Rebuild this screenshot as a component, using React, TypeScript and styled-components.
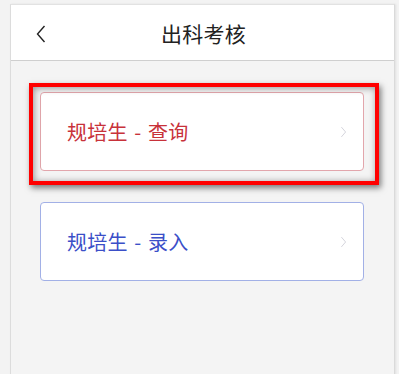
import React from "react";
import styled, { createGlobalStyle } from "styled-components";

const Global = createGlobalStyle`
  html, body { margin: 0; padding: 0; background: #f3f3f3; }
  body { font-family: "Noto Sans CJK SC", "Noto Sans", sans-serif; }
`;

const Frame = styled.div`
  margin: 4px 0 0 10px;
  width: 383px;
  height: 370px;
  background: #f4f4f4;
  border-left: 1px solid #dcdcdc;
  border-right: 1px solid #dadada;
  border-top: 1px solid #e2e2e2;
  box-shadow: 1px 0 2px rgba(0, 0, 0, 0.08);
  display: flex;
  flex-direction: column;
`;

const Header = styled.header`
  height: 55px;
  background: #fff;
  border-bottom: 1px solid #cfcfcf;
  display: flex;
  align-items: center;
  justify-content: center;
  position: relative;
`;

const Back = styled.button`
  position: absolute;
  left: 22px;
  top: 19px;
  width: 16px;
  height: 20px;
  padding: 0;
  border: 0;
  background: none;
  display: flex;
  align-items: center;
  justify-content: center;
`;

const Title = styled.h1`
  margin: 0 0 0 2px;
  font-size: 21px;
  font-weight: 400;
  color: #222;
  letter-spacing: 0.3px;
`;

const List = styled.div`
  padding: 31px 30px 0 29px;
  display: flex;
  flex-direction: column;
  gap: 31px;
`;

const Card = styled.div<{ $tone: string; $line: string }>`
  position: relative;
  height: 77px;
  background: #fff;
  border: 1px solid ${(p) => p.$line};
  border-radius: 4px;
  display: flex;
  align-items: center;
  justify-content: space-between;
  padding: 0 16px 0 26px;
  color: ${(p) => p.$tone};
  font-size: 20px;
`;

const Label = styled.span`
  letter-spacing: 0.2px;
  word-spacing: 2px;
`;

const Highlight = styled.div`
  position: absolute;
  left: -12px;
  top: -10px;
  right: -16px;
  bottom: -15px;
  border: 4px solid #ff0000;
  box-shadow: 2px 3px 6px rgba(0, 0, 0, 0.5), inset 1px 1px 7px rgba(0, 0, 0, 0.4);
  pointer-events: none;
`;

const Chevron = ({ color, w, h }: { color: string; w: number; h: number }) => (
  <svg width={w} height={h} viewBox="0 0 10 16" fill="none">
    <path d="M2 1 L8 8 L2 15" stroke={color} strokeWidth="1.3" />
  </svg>
);

export default function App() {
  return (
    <>
      <Global />
      <Frame>
        <Header>
          <Back>
            <svg width="10" height="18" viewBox="0 0 10 18" fill="none">
              <path d="M8.5 1 L1.5 9 L8.5 17" stroke="#222" strokeWidth="1.4" />
            </svg>
          </Back>
          <Title>出科考核</Title>
        </Header>
        <List>
          <Card $tone="#c8323a" $line="#e2a6ac">
            <Label>规培生 - 查询</Label>
            <Chevron color="#d0d0d8" w={7} h={12} />
            <Highlight />
          </Card>
          <Card $tone="#3b4fc8" $line="#a2b0e6">
            <Label>规培生 - 录入</Label>
            <Chevron color="#d0d0d8" w={7} h={12} />
          </Card>
        </List>
      </Frame>
    </>
  );
}
